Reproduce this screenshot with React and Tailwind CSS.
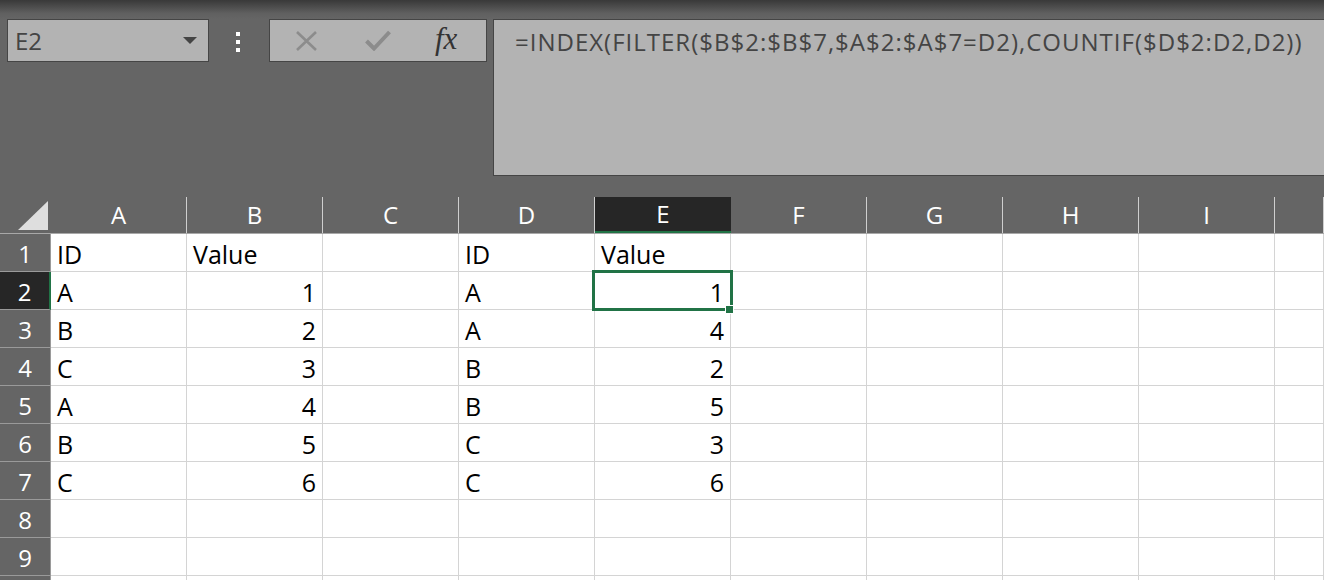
import { useState } from 'react';

const COLS = ['A', 'B', 'C', 'D', 'E', 'F', 'G', 'H', 'I', 'J'];

const DATA = {
  1: { A: 'ID', B: 'Value', D: 'ID', E: 'Value' },
  2: { A: 'A', B: 1, D: 'A', E: 1 },
  3: { A: 'B', B: 2, D: 'A', E: 4 },
  4: { A: 'C', B: 3, D: 'B', E: 2 },
  5: { A: 'A', B: 4, D: 'B', E: 5 },
  6: { A: 'B', B: 5, D: 'C', E: 3 },
  7: { A: 'C', B: 6, D: 'C', E: 6 },
};

// row 10 only peeks in at the bottom edge
const ROWS = [1, 2, 3, 4, 5, 6, 7, 8, 9, 10];

function NameBox({ value }) {
  return (
    <div className="w-[202px] h-[43px] bg-[#b3b3b3] border border-[#454545] flex items-center justify-between pl-[7px] pr-[11px]">
      <span className="text-[24px] leading-none text-[#444]">{value}</span>
      <svg width="14" height="8" viewBox="0 0 14 8">
        <path d="M0 0 H14 L7 7 Z" fill="#444" />
      </svg>
    </div>
  );
}

function FormulaButtons() {
  return (
    <div className="w-[218px] h-[43px] bg-[#b3b3b3] border border-[#454545] flex items-center">
      <svg className="ml-[25px]" width="23" height="20" viewBox="0 0 23 20">
        <path d="M2 1 L21 19 M21 1 L2 19" stroke="#8c8c8c" strokeWidth="2.6" />
      </svg>
      <svg className="ml-[47px]" width="26" height="21" viewBox="0 0 26 21">
        <path d="M1.5 11 L9 18.5 L24.5 2" stroke="#8c8c8c" strokeWidth="4" fill="none" />
      </svg>
      <span className="ml-[44px] text-[31px] leading-none italic text-[#333] font-['Liberation_Serif',serif] -mt-[5px]">
        fx
      </span>
    </div>
  );
}

export default function App() {
  const [selected] = useState({ col: 'E', row: 2 });

  return (
    <div className="w-[1324px] h-[580px] overflow-hidden bg-[#656565] font-['Open_Sans',sans-serif]">
      <div className="h-[196px] flex flex-col">
        <div className="h-[19px] bg-gradient-to-b from-[#393939] via-[#606060] via-70% to-[#656565]" />
        <div className="flex items-start">
          <div className="ml-[7px]">
            <NameBox value="E2" />
          </div>
          <div className="ml-[27px] mt-[13px] flex flex-col gap-[4px]">
            <div className="w-[4px] h-[4px] bg-white" />
            <div className="w-[4px] h-[4px] bg-white" />
            <div className="w-[4px] h-[4px] bg-white" />
          </div>
          <div className="ml-[29px]">
            <FormulaButtons />
          </div>
          <div className="ml-[6px] flex-1 h-[157px] bg-[#b3b3b3] border border-r-0 border-[#454545] pl-[21px] pt-[10px]">
            <span className="text-[24px] tracking-[1px] leading-none text-[#444] whitespace-nowrap">
              =INDEX(FILTER($B$2:$B$7,$A$2:$A$7=D2),COUNTIF($D$2:D2,D2))
            </span>
          </div>
        </div>
      </div>

      <div className="relative">
        <div className="flex h-[38px] border-b border-[#a8a8a8]">
          <div className="w-[51px] shrink-0 pt-[1px] flex items-end justify-end pr-[3px] pb-[3px]">
            <svg width="30" height="29" viewBox="0 0 30 29">
              <path d="M30 0 V29 H0 Z" fill="#dedede" />
            </svg>
          </div>
          {COLS.map((c) => {
            const active = c === selected.col;
            return (
              <div
                key={c}
                className={`${c === 'J' ? 'w-[49px]' : 'w-[136px]'} shrink-0 mt-[1px] flex items-center justify-center text-[24px] leading-none text-white ${
                  active ? 'bg-[#262626] border-b-2 border-[#217346]' : 'border-r border-[#cfcfcf]'
                }`}
              >
                {c === 'J' ? '' : c}
              </div>
            );
          })}
        </div>

        {ROWS.map((r) => {
          const active = r === selected.row;
          return (
            <div key={r} className="flex h-[38px]">
              <div
                className={`w-[51px] shrink-0 flex items-center justify-center text-[24px] leading-none text-white border-b ${
                  active ? 'bg-[#262626] border-[#9a9a9a] border-r-2 border-r-[#217346]' : 'bg-[#656565] border-[#9a9a9a] border-r border-r-[#9a9a9a]'
                }`}
              >
                {r < 10 && <span className="pt-[3px]">{r}</span>}
              </div>
              {COLS.map((c) => {
                const v = DATA[r]?.[c];
                const num = typeof v === 'number';
                return (
                  <div
                    key={c}
                    className={`${c === 'J' ? 'w-[49px]' : 'w-[136px]'} shrink-0 bg-white border-r border-b border-[#d4d4d4] flex items-end px-[6px] pb-[4px] text-[25px] leading-none text-black ${
                      num ? 'justify-end' : 'justify-start'
                    }`}
                  >
                    {v ?? ''}
                  </div>
                );
              })}
            </div>
          );
        })}

        <div className="absolute left-[592px] top-[74px] w-[141px] h-[41px] border-[3px] border-[#217346] pointer-events-none" />
        <div className="absolute left-[725px] top-[109px] w-[9px] h-[9px] bg-[#217346] border border-white" />
      </div>
    </div>
  );
}
